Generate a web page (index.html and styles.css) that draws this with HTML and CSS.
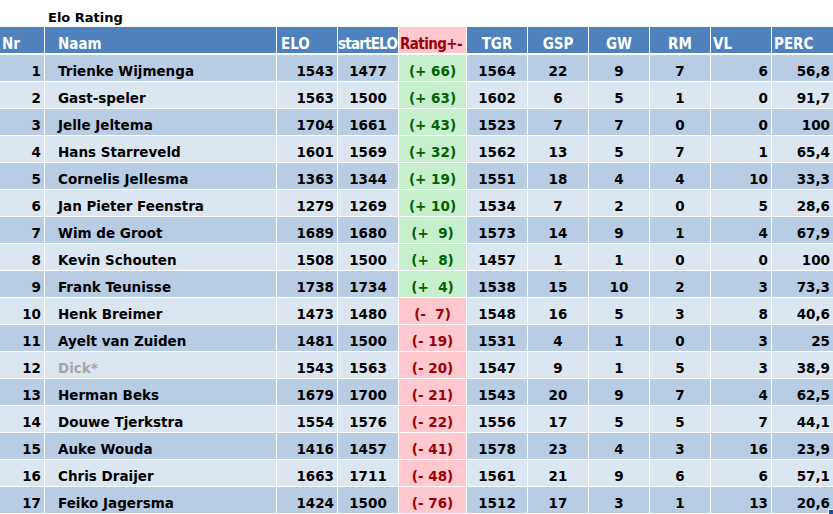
FILE: index.html
```html
<!DOCTYPE html>
<html>
<head>
<meta charset="utf-8">
<link rel="stylesheet" href="styles.css">
</head>
<body>
<div class="sheet">
  <div class="title"><span>Elo Rating</span></div>
  <div class="row head">
    <div class="c l">Nr</div>
    <div class="c name">Naam</div>
    <div class="c l elo">ELO</div>
    <div class="c l tight">startELO</div>
    <div class="c l rating-h">Rating+-</div>
    <div class="c m">TGR</div>
    <div class="c m">GSP</div>
    <div class="c m">GW</div>
    <div class="c m">RM</div>
    <div class="c l">VL</div>
    <div class="c l">PERC</div>
  </div>
  <div class="row dark"><div class="c r">1</div><div class="c name">Trienke Wijmenga</div><div class="c r">1543</div><div class="c m">1477</div><div class="c m pos">(+ 66)</div><div class="c m">1564</div><div class="c m">22</div><div class="c m">9</div><div class="c m">7</div><div class="c r">6</div><div class="c r">56,8</div></div>
  <div class="row light"><div class="c r">2</div><div class="c name">Gast-speler</div><div class="c r">1563</div><div class="c m">1500</div><div class="c m pos">(+ 63)</div><div class="c m">1602</div><div class="c m">6</div><div class="c m">5</div><div class="c m">1</div><div class="c r">0</div><div class="c r">91,7</div></div>
  <div class="row dark"><div class="c r">3</div><div class="c name">Jelle Jeltema</div><div class="c r">1704</div><div class="c m">1661</div><div class="c m pos">(+ 43)</div><div class="c m">1523</div><div class="c m">7</div><div class="c m">7</div><div class="c m">0</div><div class="c r">0</div><div class="c r">100</div></div>
  <div class="row light"><div class="c r">4</div><div class="c name">Hans Starreveld</div><div class="c r">1601</div><div class="c m">1569</div><div class="c m pos">(+ 32)</div><div class="c m">1562</div><div class="c m">13</div><div class="c m">5</div><div class="c m">7</div><div class="c r">1</div><div class="c r">65,4</div></div>
  <div class="row dark"><div class="c r">5</div><div class="c name">Cornelis Jellesma</div><div class="c r">1363</div><div class="c m">1344</div><div class="c m pos">(+ 19)</div><div class="c m">1551</div><div class="c m">18</div><div class="c m">4</div><div class="c m">4</div><div class="c r">10</div><div class="c r">33,3</div></div>
  <div class="row light"><div class="c r">6</div><div class="c name">Jan Pieter Feenstra</div><div class="c r">1279</div><div class="c m">1269</div><div class="c m pos">(+ 10)</div><div class="c m">1534</div><div class="c m">7</div><div class="c m">2</div><div class="c m">0</div><div class="c r">5</div><div class="c r">28,6</div></div>
  <div class="row dark"><div class="c r">7</div><div class="c name">Wim de Groot</div><div class="c r">1689</div><div class="c m">1680</div><div class="c m pos">(+&nbsp;&nbsp;9)</div><div class="c m">1573</div><div class="c m">14</div><div class="c m">9</div><div class="c m">1</div><div class="c r">4</div><div class="c r">67,9</div></div>
  <div class="row light"><div class="c r">8</div><div class="c name">Kevin Schouten</div><div class="c r">1508</div><div class="c m">1500</div><div class="c m pos">(+&nbsp;&nbsp;8)</div><div class="c m">1457</div><div class="c m">1</div><div class="c m">1</div><div class="c m">0</div><div class="c r">0</div><div class="c r">100</div></div>
  <div class="row dark"><div class="c r">9</div><div class="c name">Frank Teunisse</div><div class="c r">1738</div><div class="c m">1734</div><div class="c m pos">(+&nbsp;&nbsp;4)</div><div class="c m">1538</div><div class="c m">15</div><div class="c m">10</div><div class="c m">2</div><div class="c r">3</div><div class="c r">73,3</div></div>
  <div class="row light"><div class="c r">10</div><div class="c name">Henk Breimer</div><div class="c r">1473</div><div class="c m">1480</div><div class="c m neg">(-&nbsp;&nbsp;7)</div><div class="c m">1548</div><div class="c m">16</div><div class="c m">5</div><div class="c m">3</div><div class="c r">8</div><div class="c r">40,6</div></div>
  <div class="row dark"><div class="c r">11</div><div class="c name">Ayelt van Zuiden</div><div class="c r">1481</div><div class="c m">1500</div><div class="c m neg">(- 19)</div><div class="c m">1531</div><div class="c m">4</div><div class="c m">1</div><div class="c m">0</div><div class="c r">3</div><div class="c r">25</div></div>
  <div class="row light"><div class="c r">12</div><div class="c name muted">Dick*</div><div class="c r">1543</div><div class="c m">1563</div><div class="c m neg">(- 20)</div><div class="c m">1547</div><div class="c m">9</div><div class="c m">1</div><div class="c m">5</div><div class="c r">3</div><div class="c r">38,9</div></div>
  <div class="row dark"><div class="c r">13</div><div class="c name">Herman Beks</div><div class="c r">1679</div><div class="c m">1700</div><div class="c m neg">(- 21)</div><div class="c m">1543</div><div class="c m">20</div><div class="c m">9</div><div class="c m">7</div><div class="c r">4</div><div class="c r">62,5</div></div>
  <div class="row light"><div class="c r">14</div><div class="c name">Douwe Tjerkstra</div><div class="c r">1554</div><div class="c m">1576</div><div class="c m neg">(- 22)</div><div class="c m">1556</div><div class="c m">17</div><div class="c m">5</div><div class="c m">5</div><div class="c r">7</div><div class="c r">44,1</div></div>
  <div class="row dark"><div class="c r">15</div><div class="c name">Auke Wouda</div><div class="c r">1416</div><div class="c m">1457</div><div class="c m neg">(- 41)</div><div class="c m">1578</div><div class="c m">23</div><div class="c m">4</div><div class="c m">3</div><div class="c r">16</div><div class="c r">23,9</div></div>
  <div class="row light"><div class="c r">16</div><div class="c name">Chris Draijer</div><div class="c r">1663</div><div class="c m">1711</div><div class="c m neg">(- 48)</div><div class="c m">1561</div><div class="c m">21</div><div class="c m">9</div><div class="c m">6</div><div class="c r">6</div><div class="c r">57,1</div></div>
  <div class="row dark"><div class="c r">17</div><div class="c name">Feiko Jagersma</div><div class="c r">1424</div><div class="c m">1500</div><div class="c m neg">(- 76)</div><div class="c m">1512</div><div class="c m">17</div><div class="c m">3</div><div class="c m">1</div><div class="c r">13</div><div class="c r">20,6</div></div>
  <div class="handle"></div>
</div>
</body>
</html>
```
FILE: styles.css
```css
html, body {
  margin: 0;
  padding: 0;
  background: #ffffff;
}
.sheet {
  position: relative;
  width: 833px;
  height: 514px;
  overflow: hidden;
  font-family: "DejaVu Sans", sans-serif;
  font-weight: bold;
  font-size: 13.5px;
  color: #000000;
}
.title {
  height: 27px;
  display: flex;
  align-items: flex-end;
  padding-left: 48px;
  box-sizing: border-box;
  padding-bottom: 2px;
  font-size: 13px;
}
.row {
  display: grid;
  grid-template-columns: 44px 231px 60px 60px 67px 60px 60px 60px 60px 60px 61px;
  column-gap: 1px;
  height: 26px;
  margin-bottom: 1px;
  background: #ffffff;
}
.head {
  margin-bottom: 2px;
  font-family: "DejaVu Sans Condensed", "DejaVu Sans", sans-serif;
  font-stretch: condensed;
  font-size: 15px;
}
.c {
  display: flex;
  align-items: flex-end;
  padding-bottom: 2px;
  box-sizing: border-box;
  white-space: pre;
  overflow: hidden;
}
.head .c {
  background: #4f81bd;
  color: #ffffff;
  padding-bottom: 0;
}
.head .rating-h {
  background: #ffc7ce;
  color: #9c0006;
  padding-left: 1px;
  letter-spacing: -0.6px;
}
.dark .c { background: #b8cce4; }
.light .c { background: #dce6f1; }
.dark .pos, .light .pos {
  background: #c6efce;
  color: #006100;
}
.dark .neg, .light .neg {
  background: #ffc7ce;
  color: #9c0006;
}
.l { justify-content: flex-start; padding-left: 2px; }
.r { justify-content: flex-end; padding-right: 3px; }
.m { justify-content: center; }
.name { padding-left: 13px; }
.head .elo { padding-left: 4px; }
.head .tight { padding-left: 0; letter-spacing: -0.8px; }
.muted { color: #a6a6a6; }
.handle {
  position: absolute;
  right: 0;
  bottom: 0;
  width: 4px;
  height: 4px;
  background: #1f4e9c;
  border-left: 1px solid #ffffff;
  border-top: 1px solid #ffffff;
}
```
